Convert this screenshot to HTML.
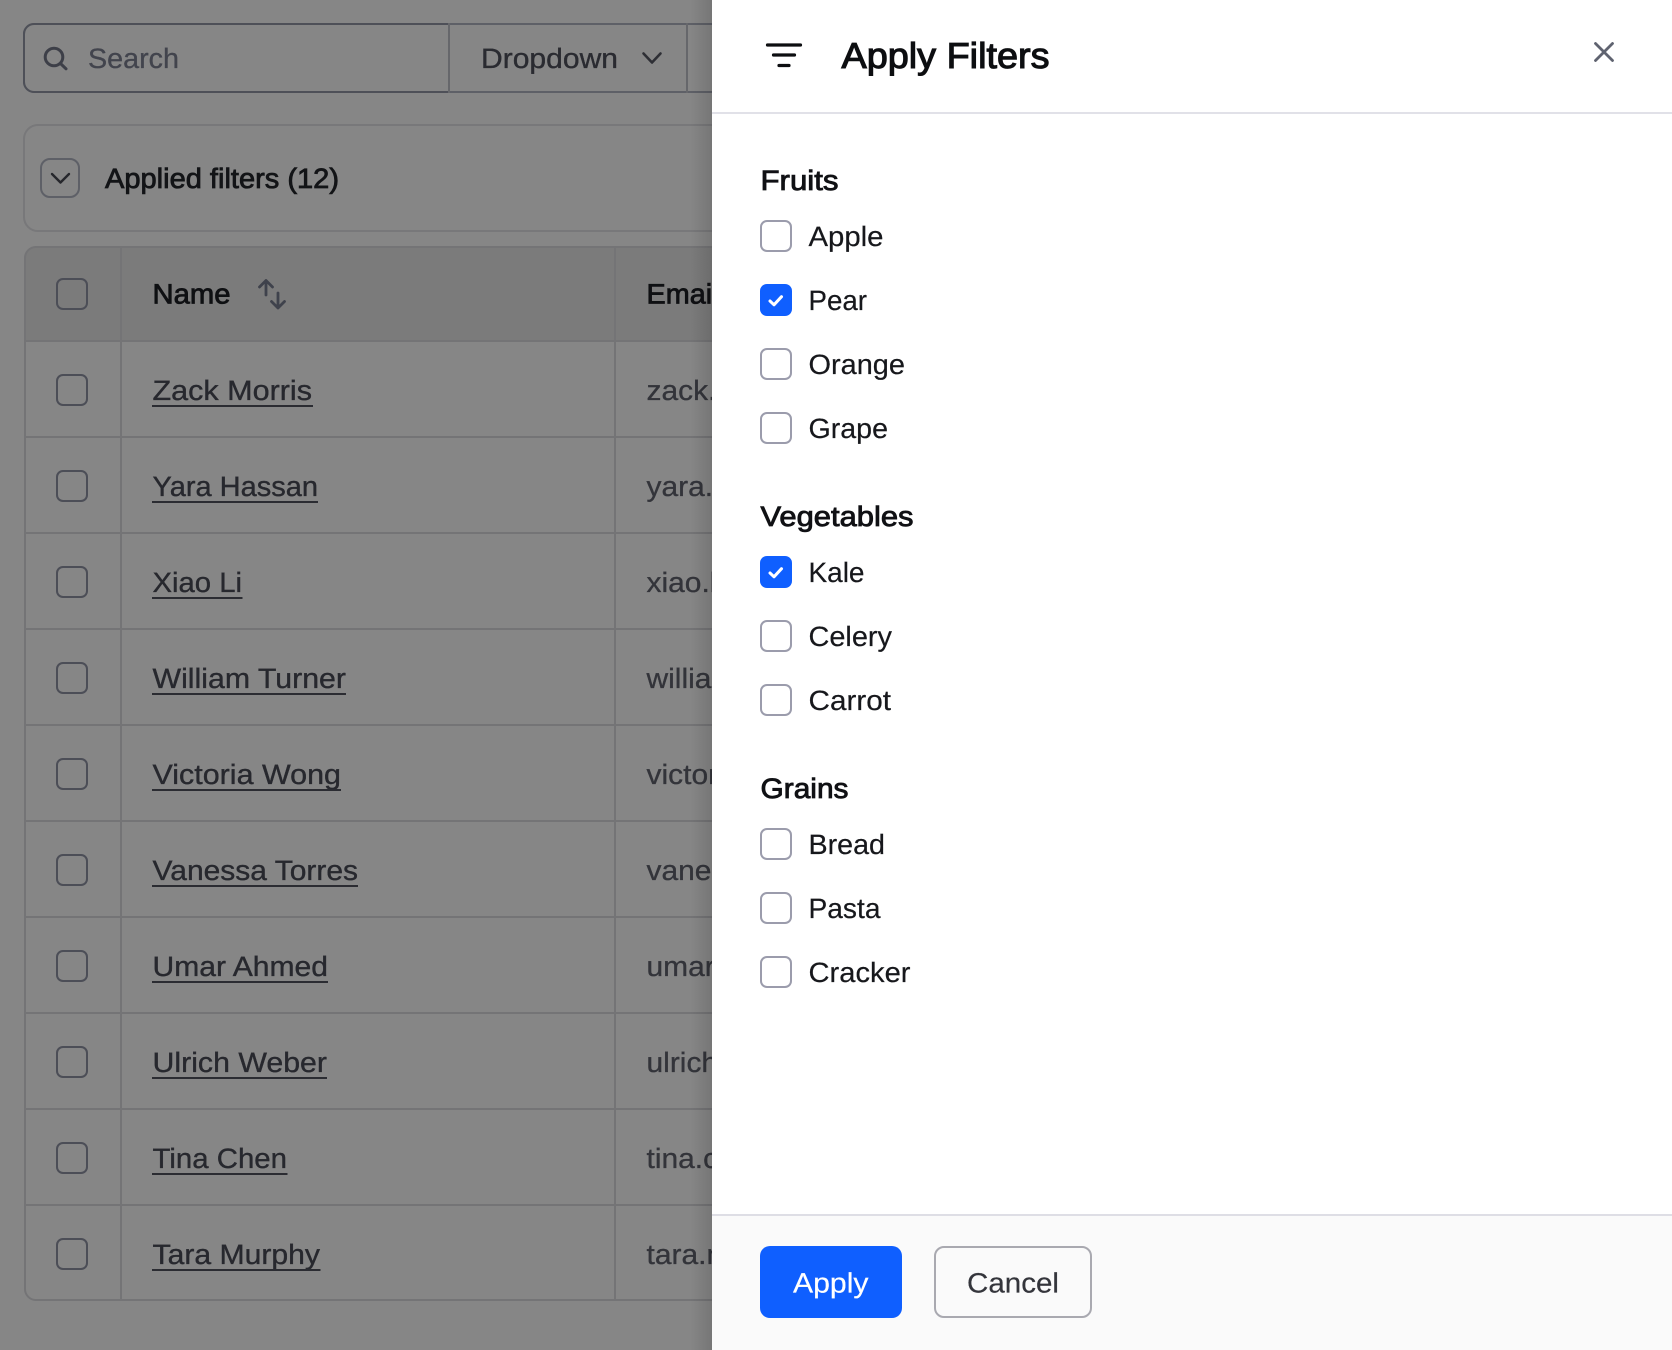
<!DOCTYPE html>
<html lang="en">
<head>
<meta charset="utf-8">
<title>Apply Filters</title>
<style>
html,body{margin:0;padding:0;background:#868686;width:1672px;height:1350px;overflow:hidden}
svg{display:block}
text{font-family:"Liberation Sans",Arial,sans-serif;font-size:28px;text-rendering:geometricPrecision}
.name{fill:#27282e;stroke:#27282e;stroke-width:.35px}
.mail{fill:#33343a;stroke:#33343a;stroke-width:.3px}
.med{stroke-width:.8px}
.lab{fill:#17181c;stroke:#17181c;stroke-width:.2px}
.hd{fill:#101114;stroke:#101114;stroke-width:.85px}
.cb{fill:none;stroke:#4c4e57;stroke-width:2}
.cbp{fill:#fff;stroke:#9b9cac;stroke-width:2}
.cbc{fill:#0f5fff}
.chk{fill:none;stroke:#fff;stroke-width:3;stroke-linecap:round;stroke-linejoin:round}
.rl{stroke:#747476;stroke-width:2}
.ul{stroke:#2b2c32;stroke-width:2}
</style>
</head>
<body>
<svg width="1672" height="1350" viewBox="0 0 1672 1350" xmlns="http://www.w3.org/2000/svg">
<defs>
<linearGradient id="sh" x1="0" x2="1" y1="0" y2="0">
<stop offset="0" stop-color="#000" stop-opacity="0"/>
<stop offset="1" stop-color="#000" stop-opacity=".12"/>
</linearGradient>
</defs>
<rect width="1672" height="1350" fill="#868686"/>

<!-- toolbar -->
<path d="M712 24H34a10 10 0 0 0-10 10v48a10 10 0 0 0 10 10h678" fill="none" stroke="#5e6067" stroke-width="2"/>
<path d="M449 24H34a10 10 0 0 0-10 10v48a10 10 0 0 0 10 10h415" fill="none" stroke="#4e5058" stroke-width="2"/>
<line x1="449" y1="23" x2="449" y2="93" stroke="#66676b" stroke-width="2"/>
<line x1="687" y1="23" x2="687" y2="93" stroke="#66676b" stroke-width="2"/>
<circle cx="54" cy="57" r="8.800" fill="none" stroke="#3d3f48" stroke-width="3"/>
<line x1="60.500" y1="63.500" x2="66" y2="68.800" stroke="#3d3f48" stroke-width="3" stroke-linecap="round"/>
<text x="88" y="68" textLength="91" lengthAdjust="spacingAndGlyphs" fill="#42444d" stroke="#42444d" stroke-width=".3">Search</text>
<text x="481" y="68" textLength="137" lengthAdjust="spacingAndGlyphs" fill="#2a2b31" stroke="#2a2b31" stroke-width=".35">Dropdown</text>
<path d="M643.500 53.500l8.500 9 8.500-9" fill="none" stroke="#2e2f35" stroke-width="2.600" stroke-linecap="round" stroke-linejoin="round"/>

<!-- applied filters -->
<rect x="24" y="125" width="760" height="106" rx="14" fill="none" stroke="#78787a" stroke-width="2"/>
<rect x="41" y="159" width="38" height="38" rx="9" fill="#868686" stroke="#5e6067" stroke-width="2"/>
<path d="M52 174l8.500 8.500 8.500-8.500" fill="none" stroke="#26272c" stroke-width="2.400" stroke-linecap="round" stroke-linejoin="round"/>
<text x="105" y="188" textLength="234" lengthAdjust="spacingAndGlyphs" fill="#131417" stroke="#131417" class="med">Applied filters (12)</text>

<!-- table -->
<path d="M25 341V258a11 11 0 0 1 11-11h700v94z" fill="#7b7b7b"/>
<path d="M760 247H36a11 11 0 0 0-11 11v1031a11 11 0 0 0 11 11h724" fill="none" stroke="#747476" stroke-width="2"/>
<line x1="121" y1="247" x2="121" y2="1300" class="rl"/>
<line x1="615" y1="247" x2="615" y2="1300" class="rl"/>
<line x1="25" y1="341" x2="712" y2="341" class="rl"/>
<line x1="25" y1="437" x2="712" y2="437" class="rl"/>
<line x1="25" y1="533" x2="712" y2="533" class="rl"/>
<line x1="25" y1="629" x2="712" y2="629" class="rl"/>
<line x1="25" y1="725" x2="712" y2="725" class="rl"/>
<line x1="25" y1="821" x2="712" y2="821" class="rl"/>
<line x1="25" y1="917" x2="712" y2="917" class="rl"/>
<line x1="25" y1="1013" x2="712" y2="1013" class="rl"/>
<line x1="25" y1="1109" x2="712" y2="1109" class="rl"/>
<line x1="25" y1="1205" x2="712" y2="1205" class="rl"/>

<rect x="57" y="279" width="30" height="30" rx="6" class="cb"/>
<text x="152.500" y="303.500" textLength="78" lengthAdjust="spacingAndGlyphs" fill="#0f1013" stroke="#0f1013" class="med">Name</text>
<path d="M266 295V280.500M259.500 287l6.500-6.500 6.500 6.500M278 293v15M271.500 301.500l6.500 6.500 6.500-6.500" fill="none" stroke="#3f424c" stroke-width="2.800" stroke-linecap="round" stroke-linejoin="round"/>
<text x="646.500" y="303.500" textLength="72" lengthAdjust="spacingAndGlyphs" fill="#0f1013" stroke="#0f1013" class="med">Email</text>

<rect x="57" y="375" width="30" height="30" rx="6" class="cb"/>
<text x="152.500" y="400" textLength="159.500" lengthAdjust="spacingAndGlyphs" class="name">Zack Morris</text>
<line x1="152" y1="406" x2="313" y2="406" class="ul"/>
<text transform="translate(646.500 400) scale(1.07 1)" class="mail">zack.morris@example.com</text>

<rect x="57" y="471" width="30" height="30" rx="6" class="cb"/>
<text x="152.500" y="496" textLength="165.500" lengthAdjust="spacingAndGlyphs" class="name">Yara Hassan</text>
<line x1="152" y1="502" x2="318" y2="502" class="ul"/>
<text transform="translate(646.500 496) scale(1.07 1)" class="mail">yara.hassan@example.com</text>

<rect x="57" y="567" width="30" height="30" rx="6" class="cb"/>
<text x="152.500" y="592" textLength="89.500" lengthAdjust="spacingAndGlyphs" class="name">Xiao Li</text>
<line x1="152" y1="598" x2="242.500" y2="598" class="ul"/>
<text transform="translate(646.500 592) scale(1.07 1)" class="mail">xiao.li@example.com</text>

<rect x="57" y="663" width="30" height="30" rx="6" class="cb"/>
<text x="152.500" y="688" textLength="193.500" lengthAdjust="spacingAndGlyphs" class="name">William Turner</text>
<line x1="152" y1="694" x2="346" y2="694" class="ul"/>
<text transform="translate(646.500 688) scale(1.07 1)" class="mail">william.turner@example.com</text>

<rect x="57" y="759" width="30" height="30" rx="6" class="cb"/>
<text x="152.500" y="784" textLength="188.500" lengthAdjust="spacingAndGlyphs" class="name">Victoria Wong</text>
<line x1="152" y1="790" x2="341" y2="790" class="ul"/>
<text transform="translate(646.500 784) scale(1.07 1)" class="mail">victoria.wong@example.com</text>

<rect x="57" y="855" width="30" height="30" rx="6" class="cb"/>
<text x="152.500" y="880" textLength="205.500" lengthAdjust="spacingAndGlyphs" class="name">Vanessa Torres</text>
<line x1="152" y1="886" x2="358" y2="886" class="ul"/>
<text transform="translate(646.500 880) scale(1.07 1)" class="mail">vanessa.torres@example.com</text>

<rect x="57" y="951" width="30" height="30" rx="6" class="cb"/>
<text x="152.500" y="976" textLength="175.500" lengthAdjust="spacingAndGlyphs" class="name">Umar Ahmed</text>
<line x1="152" y1="982" x2="328" y2="982" class="ul"/>
<text transform="translate(646.500 976) scale(1.07 1)" class="mail">umar.ahmed@example.com</text>

<rect x="57" y="1047" width="30" height="30" rx="6" class="cb"/>
<text x="152.500" y="1072" textLength="174.500" lengthAdjust="spacingAndGlyphs" class="name">Ulrich Weber</text>
<line x1="152" y1="1078" x2="327" y2="1078" class="ul"/>
<text transform="translate(646.500 1072) scale(1.07 1)" class="mail">ulrich.weber@example.com</text>

<rect x="57" y="1143" width="30" height="30" rx="6" class="cb"/>
<text x="152.500" y="1168" textLength="134.500" lengthAdjust="spacingAndGlyphs" class="name">Tina Chen</text>
<line x1="152" y1="1174" x2="287.500" y2="1174" class="ul"/>
<text transform="translate(646.500 1168) scale(1.07 1)" class="mail">tina.chen@example.com</text>

<rect x="57" y="1239" width="30" height="30" rx="6" class="cb"/>
<text x="152.500" y="1264" textLength="167.500" lengthAdjust="spacingAndGlyphs" class="name">Tara Murphy</text>
<line x1="152" y1="1270" x2="320.500" y2="1270" class="ul"/>
<text transform="translate(646.500 1264) scale(1.07 1)" class="mail">tara.murphy@example.com</text>

<!-- panel shadow -->
<rect x="690" y="0" width="22" height="1350" fill="url(#sh)"/>

<!-- panel -->
<rect x="712" y="0" width="960" height="1350" fill="#ffffff"/>
<rect x="712" y="112" width="960" height="2" fill="#e1e1e8"/>
<rect x="712" y="1214" width="960" height="136" fill="#fafafa"/>
<rect x="712" y="1214" width="960" height="2" fill="#dedee5"/>

<path d="M767.500 45h33M773.500 55h21M779 65.500h10" fill="none" stroke="#0d0e11" stroke-width="3.200" stroke-linecap="round"/>
<text x="841.500" y="68" style="font-size:36px" textLength="208" lengthAdjust="spacingAndGlyphs" fill="#0d0e11" stroke="#0d0e11" stroke-width="1.100">Apply Filters</text>
<path d="M1595.500 43.500l17 17M1612.500 43.500l-17 17" fill="none" stroke="#5f6370" stroke-width="2.800" stroke-linecap="round"/>

<!-- fruits -->
<text x="760.500" y="190" textLength="78" lengthAdjust="spacingAndGlyphs" class="hd">Fruits</text>
<rect x="761" y="221" width="30" height="30" rx="6" class="cbp"/>
<text x="808.500" y="246" textLength="75" lengthAdjust="spacingAndGlyphs" class="lab">Apple</text>
<rect x="760" y="284" width="32" height="32" rx="7" class="cbc"/>
<path d="M770 301l4 3.800 7.500-8.100" class="chk"/>
<text x="808.500" y="310" textLength="58.500" lengthAdjust="spacingAndGlyphs" class="lab">Pear</text>
<rect x="761" y="349" width="30" height="30" rx="6" class="cbp"/>
<text x="808.500" y="374" textLength="96.500" lengthAdjust="spacingAndGlyphs" class="lab">Orange</text>
<rect x="761" y="413" width="30" height="30" rx="6" class="cbp"/>
<text x="808.500" y="438" textLength="79.500" lengthAdjust="spacingAndGlyphs" class="lab">Grape</text>

<!-- vegetables -->
<text x="760.500" y="526" textLength="153" lengthAdjust="spacingAndGlyphs" class="hd">Vegetables</text>
<rect x="760" y="556" width="32" height="32" rx="7" class="cbc"/>
<path d="M770 573l4 3.800 7.500-8.100" class="chk"/>
<text x="808.500" y="582" textLength="56" lengthAdjust="spacingAndGlyphs" class="lab">Kale</text>
<rect x="761" y="621" width="30" height="30" rx="6" class="cbp"/>
<text x="808.500" y="646" textLength="83.500" lengthAdjust="spacingAndGlyphs" class="lab">Celery</text>
<rect x="761" y="685" width="30" height="30" rx="6" class="cbp"/>
<text x="808.500" y="710" textLength="82.500" lengthAdjust="spacingAndGlyphs" class="lab">Carrot</text>

<!-- grains -->
<text x="760.500" y="798" textLength="88" lengthAdjust="spacingAndGlyphs" class="hd">Grains</text>
<rect x="761" y="829" width="30" height="30" rx="6" class="cbp"/>
<text x="808.500" y="854" textLength="76.500" lengthAdjust="spacingAndGlyphs" class="lab">Bread</text>
<rect x="761" y="893" width="30" height="30" rx="6" class="cbp"/>
<text x="808.500" y="918" textLength="72" lengthAdjust="spacingAndGlyphs" class="lab">Pasta</text>
<rect x="761" y="957" width="30" height="30" rx="6" class="cbp"/>
<text x="808.500" y="982" textLength="102" lengthAdjust="spacingAndGlyphs" class="lab">Cracker</text>

<!-- footer buttons -->
<rect x="760" y="1246" width="142" height="72" rx="10" fill="#0f5fff"/>
<text x="793" y="1292.500" textLength="75.500" lengthAdjust="spacingAndGlyphs" fill="#ffffff" stroke="#ffffff" stroke-width=".2">Apply</text>
<rect x="935" y="1247" width="156" height="70" rx="9" fill="#fafafa" stroke="#a9a9b0" stroke-width="2"/>
<text x="967" y="1292.500" textLength="92" lengthAdjust="spacingAndGlyphs" fill="#34353b" stroke="#34353b" stroke-width=".2">Cancel</text>
</svg>
</body>
</html>
